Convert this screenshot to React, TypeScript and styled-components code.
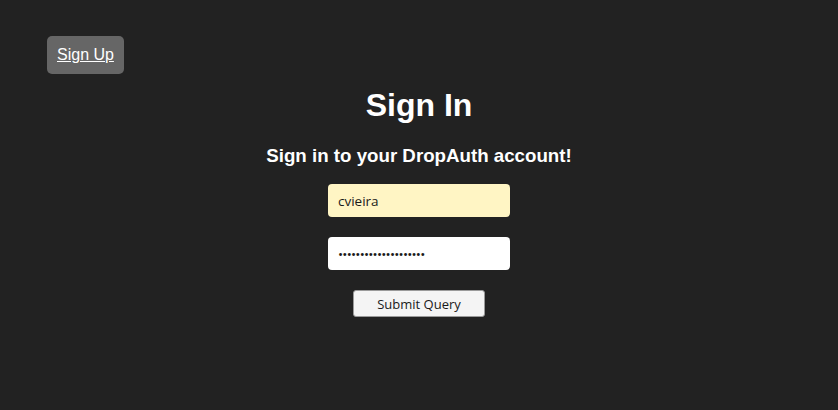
import styled, { createGlobalStyle } from "styled-components";

const GlobalStyle = createGlobalStyle`
  html, body {
    margin: 0;
    padding: 0;
    background: #222222;
    font-family: "Liberation Sans", Arial, sans-serif;
  }
`;

const Page = styled.div`
  min-height: 410px;
  color: #ffffff;
`;

const Nav = styled.nav`
  display: flex;
  padding: 36px 47px 0;
`;

const NavButton = styled.a`
  display: inline-block;
  background: #666666;
  color: #ffffff;
  font-size: 16px;
  line-height: 38px;
  padding: 0 10px;
  border-radius: 5px;
  text-decoration: underline;
  cursor: pointer;
`;

const Main = styled.main`
  display: flex;
  flex-direction: column;
  align-items: center;
`;

const Title = styled.h1`
  margin: 13px 0 0;
  font-size: 32px;
  line-height: 37px;
  font-weight: bold;
`;

const Subtitle = styled.h3`
  margin: 21px 0 0;
  font-size: 18.72px;
  line-height: 22px;
  font-weight: bold;
`;

const Form = styled.form`
  display: flex;
  flex-direction: column;
  align-items: center;
  gap: 20px;
  margin-top: 17px;
`;

const Field = styled.input<{ $filled?: boolean }>`
  box-sizing: border-box;
  width: 182px;
  height: 33px;
  border: none;
  border-radius: 4px;
  padding: 0 10px;
  background: ${(p) => (p.$filled ? "#fff5c4" : "#ffffff")};
  color: #1a1a1a;
  font-family: "Open Sans", "Noto Sans", sans-serif;
  font-size: 13.5px;
  letter-spacing: ${(p) => (p.type === "password" ? "-0.75px" : "0")};
  outline: none;
`;

const Submit = styled.button`
  box-sizing: border-box;
  width: 132px;
  height: 27px;
  background: #f4f4f4;
  border: 1px solid #9a9a9a;
  border-radius: 3px;
  color: #1a1a1a;
  font-family: "Open Sans", "Noto Sans", sans-serif;
  font-size: 13px;
  cursor: pointer;
`;

export default function App() {
  return (
    <Page>
      <GlobalStyle />
      <Nav>
        <NavButton>Sign Up</NavButton>
      </Nav>
      <Main>
        <Title>Sign In</Title>
        <Subtitle>Sign in to your DropAuth account!</Subtitle>
        <Form onSubmit={(e) => e.preventDefault()}>
          <Field type="text" defaultValue="cvieira" $filled />
          <Field type="password" defaultValue="dropauthpassword1234" />
          <Submit type="submit">Submit Query</Submit>
        </Form>
      </Main>
    </Page>
  );
}
